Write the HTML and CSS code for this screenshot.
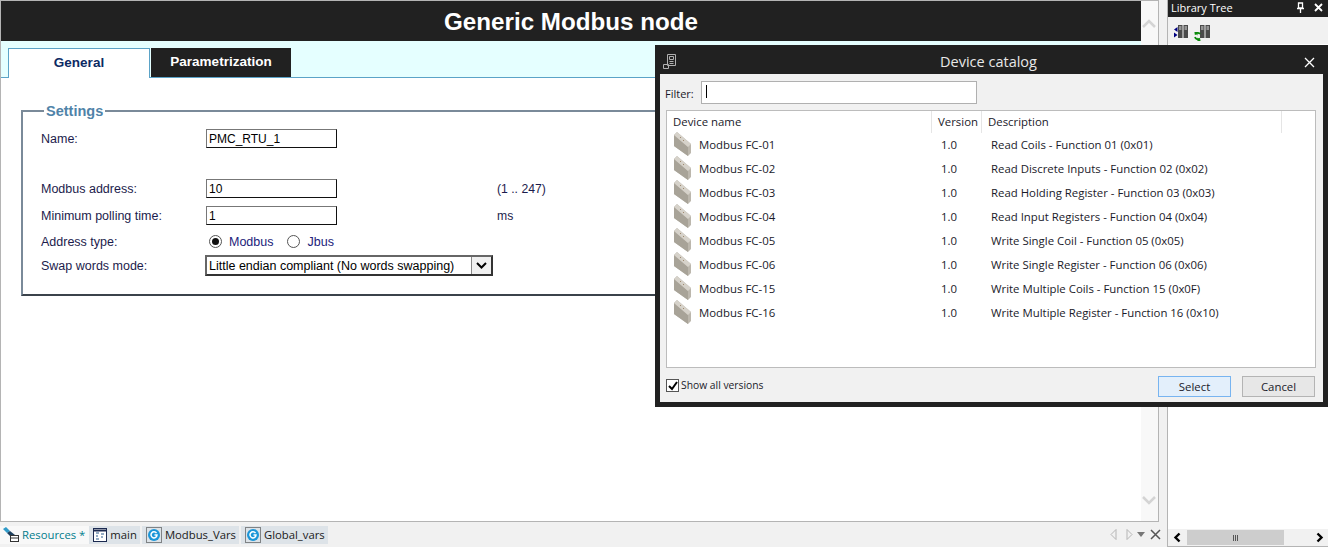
FILE: index.html
```html
<!DOCTYPE html>
<html lang="en">

<head>
    <meta charset="UTF-8">
    <title>Generic Modbus node</title>
    <link rel="stylesheet" href="styles.css">
</head>

<body>
    <div class="app">
        <div class="workspace">
            <div class="editor">
                <div class="content">
                    <h1 class="node-title">Generic Modbus node</h1>
                    <div class="tabs">
                        <div class="tab tab-active">General</div>
                        <div class="tab tab-dark">Parametrization</div>
                    </div>
                    <fieldset class="settings">
                        <legend>Settings</legend>
                        <div class="row row-name">
                            <label>Name:</label>
                            <input class="field" type="text" value="PMC_RTU_1">
                        </div>
                        <div class="row row-address">
                            <label>Modbus address:</label>
                            <input class="field" type="text" value="10">
                            <span class="unit">(1 .. 247)</span>
                        </div>
                        <div class="row row-poll">
                            <label>Minimum polling time:</label>
                            <input class="field" type="text" value="1">
                            <span class="unit">ms</span>
                        </div>
                        <div class="row row-type">
                            <label>Address type:</label>
                            <div class="radios">
                                <span class="radio radio-on"></span><span class="radio-text">Modbus</span>
                                <span class="radio"></span><span class="radio-text">Jbus</span>
                            </div>
                        </div>
                        <div class="row row-swap">
                            <label>Swap words mode:</label>
                            <div class="combo">
                                <span class="combo-text">Little endian compliant (No words swapping)</span>
                                <span class="combo-btn">
                                    <svg width="11" height="7" viewBox="0 0 11 7"><path d="M1 1l4.500 4.500L10 1" fill="none" stroke="#000" stroke-width="2"/></svg>
                                </span>
                            </div>
                        </div>
                    </fieldset>
                </div>
                <div class="vscroll">
                    <svg width="14" height="9" viewBox="0 0 14 9"><path d="M1 8l6-6 6 6" fill="none" stroke="#d4d4d4" stroke-width="2.500"/></svg>
                    <svg width="14" height="9" viewBox="0 0 14 9"><path d="M1 1l6 6 6-6" fill="none" stroke="#d4d4d4" stroke-width="2.500"/></svg>
                </div>
            </div>
            <div class="doc-tabs">
                <div class="doc-tab doc-tab-current">
                    <svg width="18" height="16" viewBox="0 0 18 16"><path d="M0 2l3-2 4 4-3 2z" fill="#2f9ac8"/><path d="M4 6l3-2 5 4-3 3z" fill="#1d3f5e"/><rect x="7.500" y="8.500" width="8" height="6" fill="#fff" stroke="#333"/><path d="M7.500 11h8" stroke="#333"/></svg>
                    Resources *
                </div>
                <div class="doc-tab">
                    <svg width="14" height="14" viewBox="0 0 14 14"><rect x="0.500" y="0.500" width="13" height="13" fill="#fff" stroke="#1c2a50"/><path d="M0 2.500h14" stroke="#1c2a50" stroke-width="2"/><path d="M3 5h3M3 8h2M3 11h3M8 6h3M8 9h2" stroke="#2a5a8a"/></svg>
                    main
                </div>
                <div class="doc-tab">
                    <svg width="16" height="16" viewBox="0 0 16 16"><rect x="0.500" y="0.500" width="15" height="15" fill="none" stroke="#222" stroke-dasharray="1 1"/><circle cx="8" cy="8" r="6" fill="#1b96d8"/><path d="M10.500 6.200A3 3 0 1 0 11 8H8.500" fill="none" stroke="#fff" stroke-width="1.500"/></svg>
                    Modbus_Vars
                </div>
                <div class="doc-tab">
                    <svg width="16" height="16" viewBox="0 0 16 16"><rect x="0.500" y="0.500" width="15" height="15" fill="none" stroke="#222" stroke-dasharray="1 1"/><circle cx="8" cy="8" r="6" fill="#1b96d8"/><path d="M10.500 6.200A3 3 0 1 0 11 8H8.500" fill="none" stroke="#fff" stroke-width="1.500"/></svg>
                    Global_vars
                </div>
                <div class="doc-nav">
                    <svg class="nav-prev" width="7" height="11" viewBox="0 0 7 11"><path d="M6 .5v10L1 5.500z" fill="none" stroke="#b5b5b5"/></svg>
                    <svg class="nav-next" width="7" height="11" viewBox="0 0 7 11"><path d="M1 .5v10l5-5z" fill="none" stroke="#b5b5b5"/></svg>
                    <svg width="8" height="5" viewBox="0 0 8 5"><path d="M0 0h8L4 5z" fill="#777"/></svg>
                    <svg width="11" height="11" viewBox="0 0 11 11"><path d="M1 1l9 9M10 1l-9 9" stroke="#555" stroke-width="1.500"/></svg>
                </div>
            </div>
        </div>

        <aside class="library">
            <div class="library-head">
                <span>Library Tree</span>
                <span class="library-btns">
                    <svg width="9" height="11" viewBox="0 0 9 11"><path d="M2.500 1h4v5h-4zM1 6.500h7M4.500 7v4" fill="none" stroke="#fff" stroke-width="1.300"/></svg>
                    <svg width="9" height="9" viewBox="0 0 9 9"><path d="M1 1l7 7M8 1L1 8" stroke="#fff" stroke-width="1.800"/></svg>
                </span>
            </div>
            <div class="library-tools">
                <svg width="14" height="13" viewBox="0 0 14 13"><path d="M3.500 2L0 4.500 3.500 7zM0 7.500l3.500 2.500L0 12.500z" fill="#000080"/><path d="M4 0h4.500v13H4zM9.500 0H14v13H9.500z" fill="#4a4a4a"/><path d="M5 2h2.500M10.500 2H13M5 4h2.500M10.500 4H13" stroke="#ddd"/></svg>
                <svg width="16" height="16" viewBox="0 0 16 16"><path d="M6 0h4.500v13H6zM11.500 0H16v13h-4.500z" fill="#4a4a4a"/><path d="M7 2h2.500M12.500 2H15M7 4h2.500M12.500 4H15" stroke="#ddd"/><path d="M6 9a3 3 0 0 0-5 .5M1 12a3 3 0 0 0 5 1.500" fill="none" stroke="#0a8a0a" stroke-width="1.800"/><path d="M0 7h3.500v3.500zM7 16H3.500v-3.500z" fill="#0a8a0a"/></svg>
            </div>
            <div class="library-body"></div>
            <div class="hscroll">
                <svg width="8" height="11" viewBox="0 0 8 11"><path d="M6.500 1.500L2.500 5.500l4 4" fill="none" stroke="#000" stroke-width="2.400"/></svg>
                <div class="hscroll-track"><div class="hscroll-thumb"><span></span><span></span><span></span></div></div>
                <svg width="8" height="11" viewBox="0 0 8 11"><path d="M1.500 1.500l4 4-4 4" fill="none" stroke="#000" stroke-width="2.400"/></svg>
            </div>
        </aside>

        <div class="dialog">
            <div class="dialog-title">
                <svg class="dialog-icon" width="14" height="15" viewBox="0 0 14 15"><path d="M4.500 .5h8v11h-8zM6.500 2.500h4v3h-4zM6.500 7.500h4M6.500 9.500h4M.5 10.500h5v4h-5z" fill="#222" stroke="#b0b0b0"/></svg>
                <span class="dialog-name">Device catalog</span>
                <svg class="dialog-close" width="11" height="11" viewBox="0 0 11 11"><path d="M1 1l9 9M10 1l-9 9" stroke="#fff" stroke-width="1.300"/></svg>
            </div>
            <div class="dialog-body">
                <div class="filter">
                    <span>Filter:</span>
                    <div class="filter-input"><i></i></div>
                </div>
                <div class="list">
                    <div class="list-head">
                        <div class="col-name">Device name</div>
                        <div class="col-ver">Version</div>
                        <div class="col-desc">Description</div>
                    </div>
                    <div class="list-row"><svg class="dev"><use href="#dev"/></svg><div class="cell-name">Modbus FC-01</div><div class="cell-ver">1.0</div><div class="cell-desc">Read Coils - Function 01 (0x01)</div></div>
                    <div class="list-row"><svg class="dev"><use href="#dev"/></svg><div class="cell-name">Modbus FC-02</div><div class="cell-ver">1.0</div><div class="cell-desc">Read Discrete Inputs - Function 02 (0x02)</div></div>
                    <div class="list-row"><svg class="dev"><use href="#dev"/></svg><div class="cell-name">Modbus FC-03</div><div class="cell-ver">1.0</div><div class="cell-desc">Read Holding Register - Function 03 (0x03)</div></div>
                    <div class="list-row"><svg class="dev"><use href="#dev"/></svg><div class="cell-name">Modbus FC-04</div><div class="cell-ver">1.0</div><div class="cell-desc">Read Input Registers - Function 04 (0x04)</div></div>
                    <div class="list-row"><svg class="dev"><use href="#dev"/></svg><div class="cell-name">Modbus FC-05</div><div class="cell-ver">1.0</div><div class="cell-desc">Write Single Coil - Function 05 (0x05)</div></div>
                    <div class="list-row"><svg class="dev"><use href="#dev"/></svg><div class="cell-name">Modbus FC-06</div><div class="cell-ver">1.0</div><div class="cell-desc">Write Single Register - Function 06 (0x06)</div></div>
                    <div class="list-row"><svg class="dev"><use href="#dev"/></svg><div class="cell-name">Modbus FC-15</div><div class="cell-ver">1.0</div><div class="cell-desc">Write Multiple Coils - Function 15 (0x0F)</div></div>
                    <div class="list-row"><svg class="dev"><use href="#dev"/></svg><div class="cell-name">Modbus FC-16</div><div class="cell-ver">1.0</div><div class="cell-desc">Write Multiple Register - Function 16 (0x10)</div></div>
                </div>
                <div class="dialog-foot">
                    <span class="check">
                        <svg width="10" height="10" viewBox="0 0 10 10"><path d="M1 5l3 3 5-7" fill="none" stroke="#000" stroke-width="2"/></svg>
                    </span>
                    <span class="check-text">Show all versions</span>
                    <button class="btn btn-select">Select</button>
                    <button class="btn btn-cancel">Cancel</button>
                </div>
            </div>
        </div>
    </div>

    <svg class="defs" width="0" height="0">
        <symbol id="dev" viewBox="0 0 18 24">
            <path d="M0 3l3-3 14 12v9l-3 3L0 14z" fill="#bcb7ad"/>
            <path d="M0 3l14 12v9L0 14z" fill="#a8a398"/>
            <path d="M3 0l14 12-3 3L0 3z" fill="#d6d2ca"/>
            <path d="M6 5l1 1M9 8l1 1" stroke="#a08a70"/>
        </symbol>
    </svg>
</body>

</html>
```

FILE: styles.css
```css
* {
    margin: 0;
    padding: 0;
    box-sizing: border-box;
}

html,
body {
    height: 547px;
    overflow: hidden;
}

body {
    background: #f1f1f1;
    font-family: "Liberation Sans", sans-serif;
}

.app {
    position: relative;
    display: flex;
    height: 547px;
}

/* left side */
.workspace {
    width: 1159px;
    display: flex;
    flex-direction: column;
}

.editor {
    height: 522px;
    display: flex;
    background: white;
    border: 1px solid #b4b4b4;
}

.content {
    width: 1140px;
}

.node-title {
    height: 40px;
    background: #212121;
    color: white;
    font-size: 24.200px;
    line-height: 42px;
    text-align: center;
    font-weight: bold;
}

.tabs {
    height: 37px;
    display: flex;
    align-items: flex-end;
    padding-left: 7px;
    background: #e5ffff;
    border-bottom: 1px solid #5ba3c7;
}

.tab {
    font-size: 13.500px;
    font-weight: bold;
    text-align: center;
}

.tab-active {
    width: 142px;
    height: 30px;
    margin-bottom: -1px;
    line-height: 28px;
    color: #0c2a63;
    background: white;
    border: 1px solid #5ba3c7;
    border-bottom: none;
}

.tab-dark {
    width: 140px;
    height: 29px;
    margin-left: 1px;
    line-height: 27px;
    color: white;
    background: #212121;
}

.settings {
    margin: 25px 0 0 20px;
    width: 701px;
    height: 193px;
    border: 2px solid #7a8a99;
    border-bottom-color: #3b434b;
    padding: 0 0 0 18px;
}

.settings legend {
    margin-left: 3px;
    padding: 0 2px;
    font-size: 14.500px;
    font-weight: bold;
    color: #4f83a8;
}

.row {
    display: flex;
    align-items: center;
    height: 19px;
    font-size: 12.500px;
    color: #1c1c4c;
}

.row label {
    width: 165px;
}

.row-name {
    margin-top: 10px;
}

.row-address {
    margin-top: 31px;
}

.row-poll {
    margin-top: 8px;
}

.row-type {
    margin-top: 7px;
}

.row-swap {
    margin-top: 4px;
    height: 21px;
}

.field {
    width: 131px;
    height: 19px;
    padding: 0 2px;
    font: 12px "Liberation Sans", sans-serif;
    color: black;
    background: white;
    border: 1px solid #111;
    border-top-color: #777;
    border-left-color: #777;
    outline: none;
}

.unit {
    margin-left: 160px;
    font-size: 12.200px;
}

.radios {
    display: flex;
    align-items: center;
    margin-left: 3px;
}

.radio {
    width: 13px;
    height: 13px;
    border: 1px solid #555;
    border-radius: 50%;
    background: white;
    position: relative;
}

.radio-on::after {
    content: "";
    position: absolute;
    left: 2px;
    top: 2px;
    width: 7px;
    height: 7px;
    border-radius: 50%;
    background: #111;
}

.radio-text {
    margin: 0 14px 0 7px;
    color: #22227a;
}

.combo {
    width: 288px;
    height: 21px;
    margin-left: -1px;
    display: flex;
    align-items: center;
    justify-content: space-between;
    border: 2px solid #333;
    border-top-color: #666;
    border-left-color: #666;
    background: white;
    color: black;
    padding-left: 2px;
}

.combo-text {
    white-space: nowrap;
}

.combo-btn {
    width: 20px;
    height: 17px;
    display: flex;
    align-items: center;
    justify-content: center;
    background: #f0f0f0;
    border-left: 1px solid #888;
}

.vscroll {
    flex: 1;
    display: flex;
    flex-direction: column;
    justify-content: space-between;
    align-items: center;
    padding: 18px 1px 16px 0;
    background: #f8f8f8;
}

.doc-tabs {
    flex: 1;
    display: flex;
    align-items: center;
}

.doc-tab {
    height: 18px;
    display: flex;
    align-items: center;
    gap: 3px;
    margin-right: 2px;
    padding: 0 3px 0 4px;
    font-family: "Open Sans", sans-serif;
    font-size: 11.300px;
    color: #1a1a1a;
    background: #dde3e8;
}

.doc-tab-current {
    background: #f8f8f8;
    color: #007c8c;
    margin-right: 0;
    padding: 0 4px 0 3px;
    gap: 1px;
}

.doc-nav {
    margin-left: auto;
    margin-right: -2px;
    display: flex;
    align-items: center;
    gap: 5px;
}

.nav-prev {
    margin-right: 4px;
}

.nav-next {
    margin-right: -1px;
}

/* right side */
.library {
    margin-left: 8px;
    flex: 1;
    display: flex;
    flex-direction: column;
    background: white;
    border-left: 1px solid #b4b4b4;
    border-bottom: 1px solid #b4b4b4;
}

.library-head {
    height: 17px;
    display: flex;
    justify-content: space-between;
    align-items: center;
    padding: 0 5px 2px 3px;
    background: #212121;
    color: white;
    font-family: "Open Sans", sans-serif;
    font-size: 11px;
}

.library-btns {
    display: flex;
    align-items: center;
    gap: 9px;
}

.library-tools {
    height: 27px;
    display: flex;
    align-items: flex-start;
    gap: 6px;
    padding: 8px 0 0 6px;
    background: #f1f1f1;
}

.library-body {
    flex: 1;
}

.hscroll {
    height: 17px;
    display: flex;
    align-items: center;
    gap: 5px;
    padding: 0 4px 0 5px;
    background: #f1f1f1;
}

.hscroll-track {
    flex: 1;
}

.hscroll-thumb {
    width: 97px;
    height: 15px;
    margin-left: 1px;
    display: flex;
    align-items: center;
    justify-content: center;
    gap: 1px;
    background: #cdcdcd;
}

.hscroll-thumb span {
    width: 1px;
    height: 6px;
    background: #555;
}

/* dialog over the page */
.dialog {
    position: absolute;
    left: 655px;
    top: 45px;
    width: 673px;
    height: 362px;
    display: flex;
    flex-direction: column;
    background: #212121;
    padding: 0 5px 5px;
}

.dialog-title {
    height: 29px;
    display: flex;
    align-items: center;
    position: relative;
    justify-content: center;
    padding: 4px 6px 0 0;
    color: #e8e8e8;
    font-family: "Open Sans", sans-serif;
    font-size: 14.500px;
}

.dialog-icon {
    position: absolute;
    left: 3px;
    top: 9px;
}

.dialog-close {
    position: absolute;
    right: 8px;
    top: 12px;
}

.dialog-body {
    flex: 1;
    background: #f1f1f1;
    padding: 7px 7px 5px 6px;
    font-family: "Open Sans", sans-serif;
    font-size: 11.400px;
    color: #1a1a2a;
    display: flex;
    flex-direction: column;
}

.filter {
    display: flex;
    align-items: center;
    height: 23px;
    margin-left: -1px;
    font-size: 11px;
}

.filter span {
    width: 36px;
    padding-top: 2px;
}

.filter-input {
    width: 276px;
    height: 23px;
    background: white;
    border: 1px solid #b0b0b0;
    padding: 3px 4px;
}

.filter-input i {
    display: block;
    width: 1px;
    height: 13px;
    background: black;
}

.list {
    margin-top: 6px;
    height: 258px;
    background: white;
    border: 1px solid #bcbcbc;
}

.list-head {
    height: 21px;
    display: flex;
    align-items: flex-start;
}

.col-name,
.col-ver,
.col-desc {
    height: 22px;
    line-height: 21px;
    padding-left: 6px;
    border-right: 1px solid #e5e5e5;
}

.col-name {
    width: 265px;
}

.col-ver {
    width: 50px;
}

.col-desc {
    width: 300px;
}

.list-row {
    height: 24px;
    display: flex;
    align-items: center;
    padding-left: 7px;
}

.dev {
    width: 18px;
    height: 24px;
}

.cell-name {
    margin-left: 7px;
    width: 242px;
}

.cell-ver {
    width: 50px;
}

.cell-desc {
    white-space: nowrap;
}

.dialog-foot {
    flex: 1;
    display: flex;
    align-items: flex-start;
    padding: 8px 1px 0 0;
    font-size: 10.300px;
}

.check {
    width: 13px;
    height: 13px;
    margin-top: 3px;
    display: flex;
    align-items: center;
    justify-content: center;
    background: white;
    border: 1px solid #555;
}

.check-text {
    margin: 2px 0 0 2px;
}

.btn {
    width: 73px;
    height: 21px;
    font-family: "Open Sans", sans-serif;
    font-size: 11.400px;
    color: #1a1a2a;
}

.btn-select {
    margin-left: auto;
    background: #e3effb;
    border: 1px solid #78b4f0;
}

.btn-cancel {
    margin-left: 11px;
    background: #e7e7e7;
    border: 1px solid #b4b4b4;
}

.defs {
    position: absolute;
}
```
